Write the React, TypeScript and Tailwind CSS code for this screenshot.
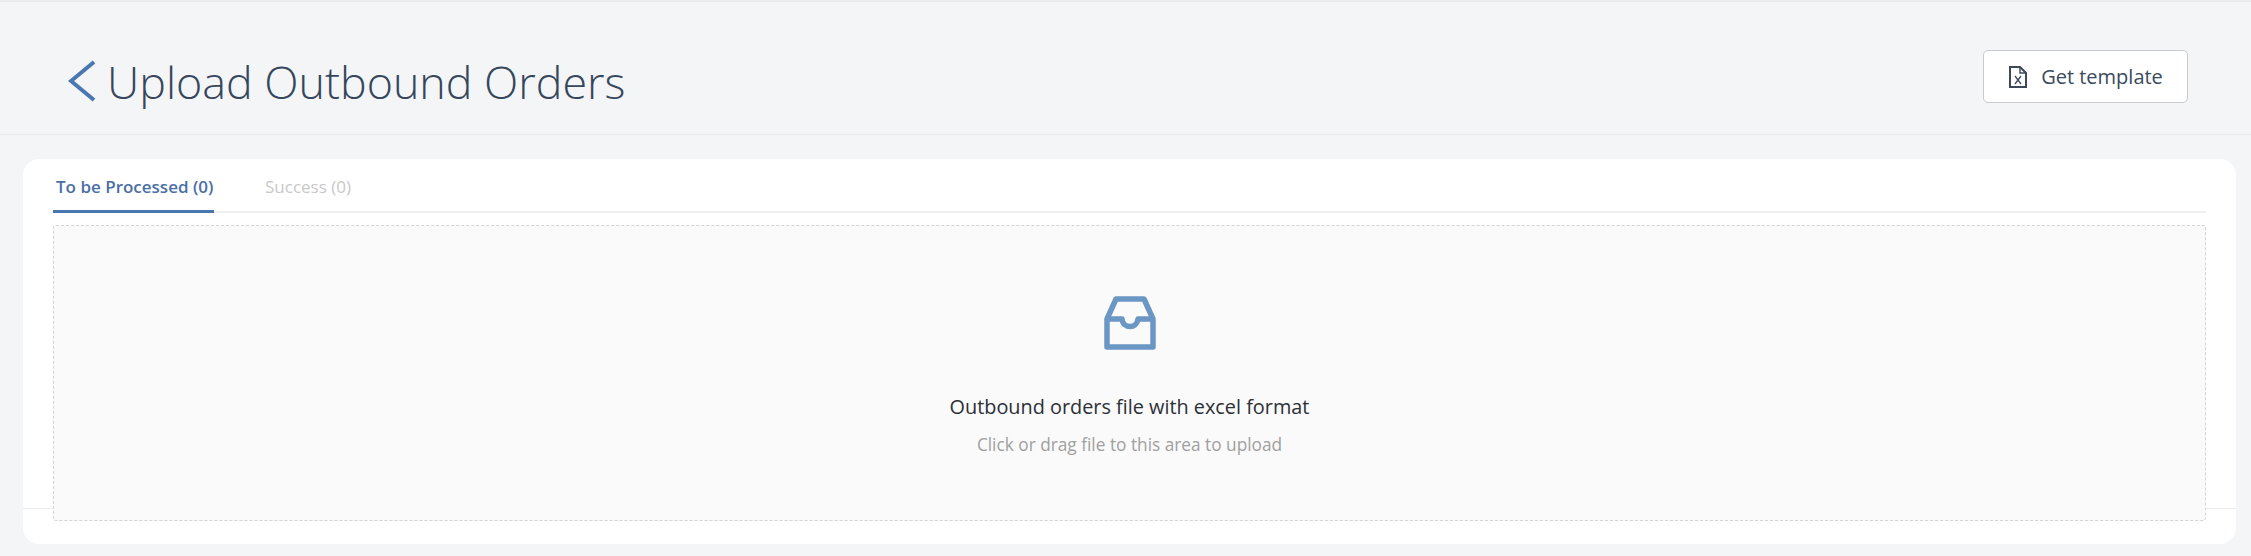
export default function App() {
  return (
    <div className="h-[556px] overflow-hidden bg-[#f4f5f7] border-t-2 border-[#e9eaec] font-['Open_Sans','Noto_Sans',sans-serif]">
      <header className="h-[133px] pt-[17px] flex items-center justify-between border-b border-[#e9eaec] pl-[68px] pr-[63px]">
        <div className="flex items-center gap-[11px] mt-[5px] mb-[-5px]">
          <svg width="28" height="42" viewBox="0 0 28 42" fill="none" className="mt-[-2px]">
            <path d="M26 2 L3 21 L26 40" stroke="#4a77b0" strokeWidth="4" />
          </svg>
          <h1 className="text-[44.8px] leading-[54px] font-light text-[#36465d] whitespace-nowrap">Upload Outbound Orders</h1>
        </div>
        <button className="w-[205px] h-[53px] pl-[1px] flex items-center justify-center gap-[14px] bg-white border border-[#c9cacc] rounded-[5px] text-[20px] text-[#3a4a60]">
          <svg width="18" height="22" viewBox="0 0 18 22" fill="none" stroke="#3f4859" strokeWidth="2">
            <path d="M1 1 H11 L17 7 V21 H1 Z" />
            <path d="M11 1 V7 H17" strokeWidth="1.4" />
            <path d="M6 10 L12 18 M12 10 L6 18" strokeWidth="1.3" />
          </svg>
          Get template
        </button>
      </header>
      <main className="relative mt-[24px] ml-[23px] mr-[15px] h-[385px] bg-white rounded-[16px] px-[30px]">
        <div className="absolute left-0 right-0 top-[349px] border-t border-[#ececec]" />
        <nav className="h-[54px] flex gap-[51px] border-b-2 border-[#eef0f2] text-[17px] leading-[56px]">
          <div className="h-[54px] w-[161px] pl-[3px] border-b-[3px] border-[#4a77b0] text-[#4a6fa5] font-semibold whitespace-nowrap">To be Processed (0)</div>
          <div className="text-[#c8c8c8] whitespace-nowrap">Success (0)</div>
        </nav>
        <section className="relative mt-[12px] h-[296px] bg-[#fafafa] border border-dashed border-[#d4d4d4] rounded-[3px] flex flex-col items-center pt-[70px]">
          <svg width="52" height="54" viewBox="0 0 52 54" fill="none" stroke="#6b97c4" strokeWidth="5.5" strokeLinejoin="round">
            <path d="M3 23 L12 3 H40 L49 23 V51 H3 Z" />
            <path d="M3 23 H18 C19 33 33 33 34 23 H49" />
          </svg>
          <p className="mt-[43px] text-[19.85px] leading-[28px] text-[#2b2f36] whitespace-nowrap">Outbound orders file with excel format</p>
          <p className="mt-[12px] text-[17.25px] leading-[24px] text-[#a0a0a0] whitespace-nowrap">Click or drag file to this area to upload</p>
        </section>
      </main>
    </div>
  );
}
